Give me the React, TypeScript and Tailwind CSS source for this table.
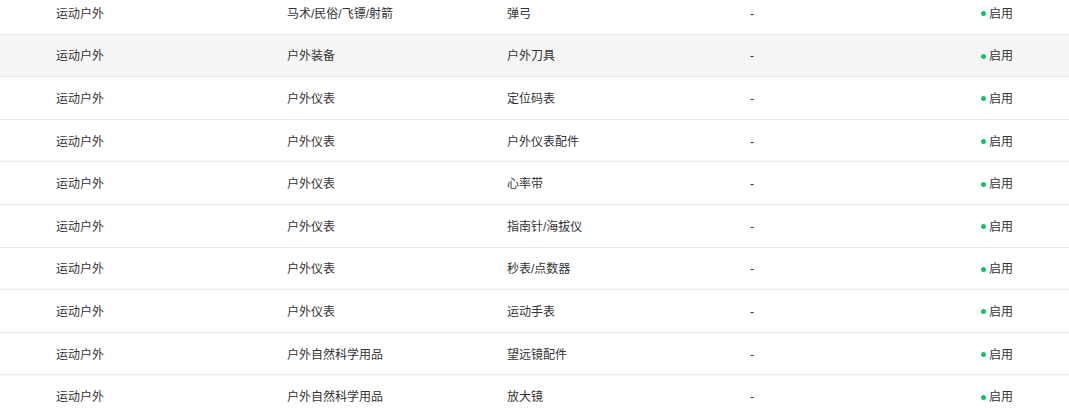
import React from "react";

const rows: [string, string, string][] = [
  ["运动户外", "马术/民俗/飞镖/射箭", "弹弓"],
  ["运动户外", "户外装备", "户外刀具"],
  ["运动户外", "户外仪表", "定位码表"],
  ["运动户外", "户外仪表", "户外仪表配件"],
  ["运动户外", "户外仪表", "心率带"],
  ["运动户外", "户外仪表", "指南针/海拔仪"],
  ["运动户外", "户外仪表", "秒表/点数器"],
  ["运动户外", "户外仪表", "运动手表"],
  ["运动户外", "户外自然科学用品", "望远镜配件"],
  ["运动户外", "户外自然科学用品", "放大镜"],
];

export default function App() {
  return (
    <div
      className="w-[1069px] h-[408px] overflow-hidden bg-white text-[12px] text-[#333]"
      style={{ fontFamily: '"Liberation Sans", "Noto Sans CJK SC", sans-serif' }}
    >
      <div className="flex flex-col -mt-[8px]">
        {rows.map((r, i) => (
          <div
            key={i}
            className={`grid grid-cols-[287px_220px_243px_230px_1fr] items-center h-[42.6px] pt-[2px] border-b border-[#e8eaec] ${
              i === 1 ? "bg-[#f5f5f5]" : "bg-white"
            }`}
          >
            <div className="pl-[56px]">{r[0]}</div>
            <div>{r[1]}</div>
            <div>{r[2]}</div>
            <div>-</div>
            <div className="flex items-center">
              <span className="w-[5px] h-[5px] rounded-full bg-[#19be6b] mr-[3px] ml-[1px]" />
              <span>启用</span>
            </div>
          </div>
        ))}
      </div>
    </div>
  );
}
